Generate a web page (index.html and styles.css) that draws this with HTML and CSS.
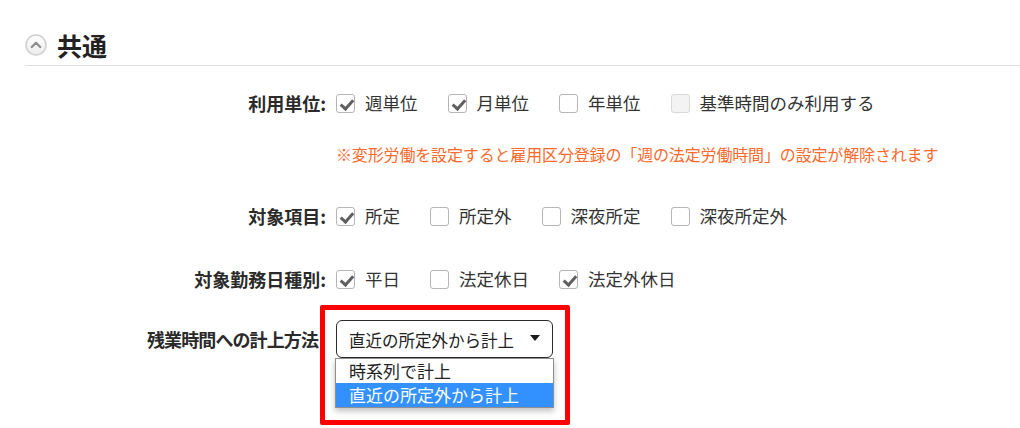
FILE: index.html
```html
<!DOCTYPE html>
<html lang="ja">
<head>
<meta charset="utf-8">
<link rel="stylesheet" href="styles.css">
</head>
<body>
<section class="section">
  <div class="heading">
    <svg class="toggle" width="22" height="22" viewBox="0 0 22 22">
      <defs>
        <linearGradient id="g" x1="0" y1="0" x2="0" y2="1">
          <stop offset="0" stop-color="#ffffff"/>
          <stop offset="1" stop-color="#ececec"/>
        </linearGradient>
      </defs>
      <circle cx="11" cy="11" r="10" fill="url(#g)" stroke="#cfcfcf" stroke-width="1.5"/>
      <path d="M6.8 13 L11 8.8 L15.2 13" fill="none" stroke="#8a8a8a" stroke-width="2.2" stroke-linecap="round" stroke-linejoin="round"/>
    </svg>
    <h2 class="title">共通</h2>
  </div>
  <div class="rule"></div>

  <div class="form">
    <div class="row row1">
      <div class="label">利用単位:</div>
      <div class="field">
        <span class="item"><span class="cb checked"></span><span class="txt">週単位</span></span>
        <span class="item"><span class="cb checked"></span><span class="txt">月単位</span></span>
        <span class="item"><span class="cb"></span><span class="txt">年単位</span></span>
        <span class="item"><span class="cb disabled"></span><span class="txt">基準時間のみ利用する</span></span>
      </div>
    </div>
    <div class="row row-note">
      <div class="label"></div>
      <div class="note">※変形労働を設定すると雇用区分登録の「週の法定労働時間」の設定が解除されます</div>
    </div>
    <div class="row row2">
      <div class="label">対象項目:</div>
      <div class="field">
        <span class="item"><span class="cb checked"></span><span class="txt">所定</span></span>
        <span class="item"><span class="cb"></span><span class="txt">所定外</span></span>
        <span class="item"><span class="cb"></span><span class="txt">深夜所定</span></span>
        <span class="item"><span class="cb"></span><span class="txt">深夜所定外</span></span>
      </div>
    </div>
    <div class="row row3">
      <div class="label">対象勤務日種別:</div>
      <div class="field">
        <span class="item"><span class="cb checked"></span><span class="txt">平日</span></span>
        <span class="item"><span class="cb"></span><span class="txt">法定休日</span></span>
        <span class="item"><span class="cb checked"></span><span class="txt">法定外休日</span></span>
      </div>
    </div>
    <div class="row row4">
      <div class="label label-nocolon">残業時間への計上方法</div>
      <div class="field">
        <div class="select-wrap">
          <div class="select">
            <span class="select-text">直近の所定外から計上</span>
            <span class="caret"></span>
          </div>
          <ul class="options">
            <li class="opt">時系列で計上</li>
            <li class="opt active">直近の所定外から計上</li>
          </ul>
          <div class="highlight"></div>
        </div>
      </div>
    </div>
  </div>
</section>
</body>
</html>
```

FILE: styles.css
```css
* { box-sizing: border-box; }
html, body {
  margin: 0;
  padding: 0;
  background: #ffffff;
}
body {
  width: 1020px;
  height: 428px;
  overflow: hidden;
  font-family: "Noto Sans CJK JP", "Noto Sans", sans-serif;
  color: #333333;
}
.section {
  padding-left: 25px;
}
.heading {
  display: flex;
  align-items: center;
  height: 22px;
  margin-top: 34px;
}
.toggle {
  display: block;
  flex: none;
}
.title {
  margin: 0 0 0 10px;
  font-size: 25px;
  font-weight: 700;
  line-height: 22px;
  color: #222222;
}
.rule {
  margin-top: 9px;
  height: 1px;
  background: #dcdcdc;
}
.form {
  margin-left: -25px;
  display: flex;
  flex-direction: column;
}
.row {
  display: grid;
  grid-template-columns: 326px 1fr;
  column-gap: 10px;
  align-items: center;
}
.row1 { margin-top: 25px; height: 24px; }
.row-note { margin-top: 27px; height: 24px; }
.row2 { margin-top: 38px; height: 24px; }
.row3 { margin-top: 39px; height: 24px; }
.row4 { margin-top: 29px; height: 38px; }
.label {
  text-align: right;
  font-weight: 700;
  font-size: 18px;
  line-height: 24px;
  color: #2a2a2a;
}
.label-nocolon {
  padding-right: 8px;
  letter-spacing: -0.9px;
}
.field {
  display: flex;
  align-items: center;
  height: 24px;
}
.item {
  display: flex;
  align-items: center;
  margin-right: 30px;
}
.cb {
  display: block;
  width: 19px;
  height: 19px;
  border: 1px solid #b5b5b5;
  border-radius: 3px;
  background: #ffffff;
  position: relative;
  flex: none;
}
.cb.checked::after {
  content: "";
  position: absolute;
  left: 6px;
  top: 2px;
  width: 5px;
  height: 10px;
  border-right: 3.5px solid #5f5f5f;
  border-bottom: 3.5px solid #5f5f5f;
  transform: rotate(42deg);
}
.cb.disabled {
  background: #f3f3f3;
  border-color: #d9d9d9;
}
.txt {
  margin-left: 10px;
  font-size: 17.5px;
  line-height: 24px;
  color: #333333;
}
.note {
  font-size: 16px;
  letter-spacing: -0.15px;
  line-height: 24px;
  color: #fa6a2c;
  white-space: nowrap;
}
.row4 .field { height: 38px; }
.select-wrap {
  position: relative;
  width: 217px;
  height: 38px;
}
.select {
  display: flex;
  align-items: center;
  justify-content: space-between;
  width: 217px;
  height: 38px;
  border: 1.5px solid #2b2b2b;
  border-radius: 6px;
  padding: 0 12px 0 12px;
  background: #ffffff;
}
.select-text {
  font-size: 16.5px;
  line-height: 24px;
  color: #222222;
  margin-top: 1px;
}
.caret {
  width: 0;
  height: 0;
  border-left: 5px solid transparent;
  border-right: 5px solid transparent;
  border-top: 6px solid #1a1a1a;
  margin-top: -2px;
}
.options {
  position: absolute;
  left: -1px;
  top: 38px;
  width: 219px;
  margin: 0;
  padding: 0;
  list-style: none;
  background: #ffffff;
  border: 1px solid #8f8f8f;
  box-shadow: 0 3px 6px rgba(0, 0, 0, 0.25);
}
.opt {
  height: 24px;
  padding-left: 13px;
  font-size: 17px;
  line-height: 24px;
  color: #222222;
}
.opt.active {
  background: #3391ff;
  color: #ffffff;
}
.highlight {
  position: absolute;
  left: -16px;
  top: -15px;
  width: 250px;
  height: 120px;
  border: 5px solid #ff0000;
  border-radius: 2px;
  pointer-events: none;
}
```
